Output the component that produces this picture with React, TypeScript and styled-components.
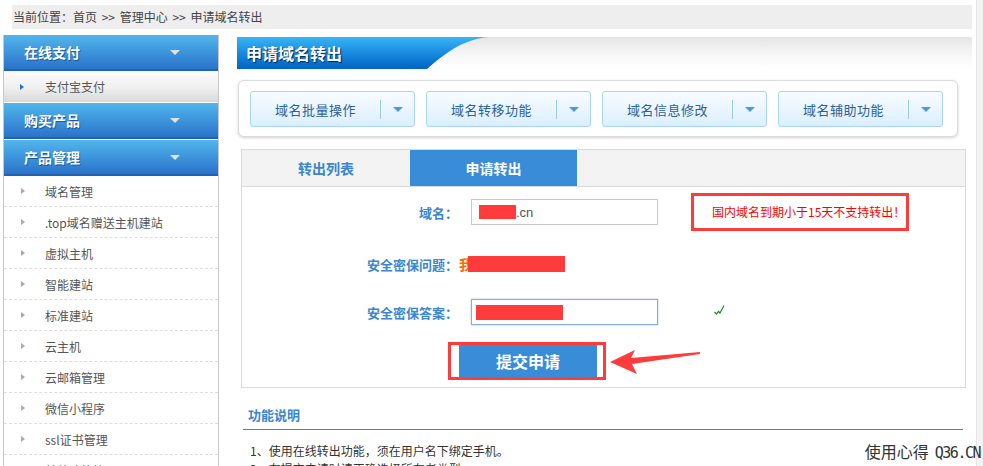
import styled, { createGlobalStyle } from 'styled-components';

const GlobalStyle = createGlobalStyle`
  html, body {
    margin: 0;
    padding: 0;
    background: #fff;
  }
  body {
    font-family: "Noto Sans CJK SC", "Noto Sans", sans-serif;
    font-size: 12px;
    color: #444;
  }
`;

const Page = styled.div`
  position: relative;
  width: 983px;
  height: 466px;
  overflow: hidden;
  background: #fff;
`;

const ScrollStrip = styled.div`
  position: absolute;
  top: 0;
  right: 0;
  width: 6px;
  height: 100%;
  background: #f3f3f3;
  border-left: 1px solid #e6e6e6;
`;

const Breadcrumb = styled.div`
  margin: 5px 11px 0 12px;
  height: 24px;
  line-height: 24px;
  padding-left: 1px;
  background: #eee;
  color: #444;
  font-size: 12px;
  white-space: nowrap;
  word-spacing: 2px;
`;

const Body = styled.div`
  display: flex;
  align-items: flex-start;
  margin-top: 6px;
  padding-left: 3px;
`;

/* ---------- sidebar ---------- */

const Sidebar = styled.aside`
  width: 214px;
  border-left: 1px solid #c8c8c8;
  border-right: 1px solid #c8c8c8;
  min-height: 440px;
`;

const SideHeader = styled.div<{ $first?: boolean }>`
  display: flex;
  align-items: center;
  justify-content: space-between;
  box-sizing: border-box;
  height: 36px;
  margin-top: ${({ $first }) => ($first ? '0' : '1px')};
  padding: 0 38px 0 20px;
  background: linear-gradient(#52b6ec 0%, #3f98dd 45%, #2a73c9 100%);
  border-bottom: 2px solid #2262b4;
  color: #fff;
  font-size: 14px;
  font-weight: bold;
  text-shadow: 1px 1px 0 rgba(0, 40, 110, 0.55);

  &::after {
    content: '';
    border-left: 5px solid transparent;
    border-right: 5px solid transparent;
    border-top: 5px solid #dde3ea;
  }
`;

const SubItem = styled.div`
  display: flex;
  align-items: center;
  height: 31px;
  padding-left: 16px;
  background: linear-gradient(#fdfdfd 0%, #efefef 55%, #d9d9d9 100%);
  color: #555;
  font-size: 12px;

  &::before {
    content: '';
    margin-right: 21px;
    border-top: 3px solid transparent;
    border-bottom: 3px solid transparent;
    border-left: 4px solid #2a6fc7;
  }
`;

const MenuItem = styled.div`
  display: flex;
  align-items: center;
  height: 30px;
  padding-left: 17px;
  border-bottom: 1px dashed #dedede;
  color: #555;
  font-size: 12px;
  white-space: nowrap;

  &::before {
    content: '';
    margin-right: 20px;
    border-top: 3px solid transparent;
    border-bottom: 3px solid transparent;
    border-left: 4px solid #aaa;
  }
`;

/* ---------- main ---------- */

const Main = styled.main`
  width: 735px;
  margin-left: 18px;
`;

const TitleBar = styled.div`
  display: flex;
  margin-top: 2px;
  height: 32px;
  background: linear-gradient(#e4e4e4 0%, #f3f3f3 40%, #fff 100%);
`;

const TitleTab = styled.div`
  width: 252px;
  height: 32px;
  box-sizing: border-box;
  padding-left: 9px;
  line-height: 32px;
  background: linear-gradient(#36b6f4 0%, #1a8ae0 50%, #0063c0 100%);
  clip-path: path('M0 0 H252 C224 2 204 20 190 32 H0 Z');
  color: #fff;
  font-size: 16px;
  font-weight: bold;
  text-shadow: 1px 1px 1px #03254f;
`;

const Toolbar = styled.div`
  display: flex;
  gap: 11px;
  box-sizing: border-box;
  width: 720px;
  height: 57px;
  margin: 11px 0 0 1px;
  padding: 10px 11px;
  border: 1px solid #dcdcdc;
  border-radius: 6px;
  box-shadow: 0 1px 3px rgba(0, 0, 0, 0.18);
  background: #fff;
`;

const DropButton = styled.div`
  display: flex;
  align-items: center;
  box-sizing: border-box;
  width: 165px;
  height: 36px;
  border: 1px solid #a9d6f6;
  border-radius: 3px;
  background: linear-gradient(#f8fcff 0%, #dbefff 100%);
`;

const DropLabel = styled.span`
  flex: 1;
  text-align: center;
  color: #2f6196;
  font-size: 13px;
  letter-spacing: 0.5px;
`;

const DropSplit = styled.span`
  width: 1px;
  height: 19px;
  background: #9fcbeb;
`;

const DropCaret = styled.span`
  display: flex;
  justify-content: center;
  width: 33px;

  &::after {
    content: '';
    border-left: 5px solid transparent;
    border-right: 5px solid transparent;
    border-top: 5px solid #4b9ad9;
  }
`;

const Panel = styled.section`
  box-sizing: border-box;
  width: 725px;
  height: 239px;
  margin: 12px 0 0 4px;
  border: 1px solid #dadada;
`;

const TabHeader = styled.div`
  display: flex;
  height: 36px;
  background: #f3f3f3;
  border-bottom: 1px solid #dadada;
`;

const Tab = styled.div<{ $active?: boolean }>`
  width: ${({ $active }) => ($active ? '167px' : '168px')};
  line-height: 36px;
  text-align: center;
  font-size: 14px;
  font-weight: bold;
  background: ${({ $active }) => ($active ? '#398cd8' : 'transparent')};
  color: ${({ $active }) => ($active ? '#fff' : '#3a86cf')};
`;

const Form = styled.div`
  padding-top: 12px;
`;

const FormRow = styled.div<{ $top: number }>`
  display: flex;
  align-items: center;
  height: 26px;
  margin-top: ${({ $top }) => $top}px;
`;

const Label = styled.span`
  width: 216px;
  text-align: right;
  color: #3a86cf;
  font-size: 13px;
  font-weight: bold;
`;

const Input = styled.div<{ $focus?: boolean }>`
  display: flex;
  align-items: center;
  box-sizing: border-box;
  width: 187px;
  height: 26px;
  margin-left: 13px;
  padding-left: ${({ $focus }) => ($focus ? '4px' : '7px')};
  border: 1px solid ${({ $focus }) => ($focus ? '#86acec' : '#c9c9c9')};
  box-shadow: ${({ $focus }) => ($focus ? '0 0 2px #aac4f2' : 'none')};
  color: #555;
  font-family: "Liberation Sans", Arial, sans-serif;
  font-size: 13px;
`;

const Redact = styled.span<{ $w: number; $h: number }>`
  display: inline-block;
  width: ${({ $w }) => $w}px;
  height: ${({ $h }) => $h}px;
  background: #ff3b3b;
`;

const Alert = styled.div`
  box-sizing: border-box;
  width: 218px;
  height: 38px;
  margin-left: 33px;
  padding-left: 18px;
  line-height: 32px;
  border: 3px solid #ff3b3b;
  color: #f00;
  font-size: 12px;
  white-space: nowrap;
`;

const Question = styled.span`
  display: flex;
  align-items: center;
  margin-left: 1px;
  color: #ff6a00;
  font-size: 14px;
  font-weight: bold;

  ${Redact} {
    margin-left: -5px;
  }
`;

const Check = styled.svg`
  margin: 0 0 6px 56px;
`;

const SubmitRow = styled.div`
  display: flex;
  align-items: center;
  margin: 17px 0 0 206px;
`;

const SubmitFrame = styled.div`
  display: flex;
  box-sizing: border-box;
  width: 158px;
  height: 38px;
  padding: 0 6px 0 8px;
  border: 3px solid #ff3b3b;
  background: #fff;
`;

const SubmitButton = styled.div`
  flex: 1;
  line-height: 32px;
  text-align: center;
  background: #398cd8;
  color: #fff;
  font-size: 16px;
  font-weight: bold;
`;

const Arrow = styled.svg`
  margin-left: 3px;
`;

const Notes = styled.section`
  width: 720px;
  margin-left: 6px;
`;

const NotesTitle = styled.div`
  padding: 18px 0 5px 5px;
  line-height: 18px;
  border-bottom: 1px solid #3a86cf;
  color: #3a86cf;
  font-size: 13px;
  font-weight: bold;
`;

const NoteLine = styled.div<{ $first?: boolean }>`
  margin-top: ${({ $first }) => ($first ? '12px' : '0')};
  padding-left: 7px;
  line-height: 18px;
  color: #333;
  font-size: 12px;
  white-space: nowrap;
`;

const Watermark = styled.div`
  position: absolute;
  right: 3px;
  bottom: 3px;
  display: flex;
  align-items: baseline;
  gap: 6px;
  color: #333;
  font-size: 16px;
  white-space: nowrap;
`;

const WatermarkSite = styled.span`
  font-family: "DejaVu Sans Mono", monospace;
  font-size: 15px;
  letter-spacing: -1.5px;
`;

const menuItems = [
  '域名管理',
  '.top域名赠送主机建站',
  '虚拟主机',
  '智能建站',
  '标准建站',
  '云主机',
  '云邮箱管理',
  '微信小程序',
  'ssl证书管理',
  '其他功能管理',
];

const tools = ['域名批量操作', '域名转移功能', '域名信息修改', '域名辅助功能'];

export default function App() {
  return (
    <Page>
      <GlobalStyle />
      <Breadcrumb>当前位置：首页 &gt;&gt; 管理中心 &gt;&gt; 申请域名转出</Breadcrumb>
      <Body>
        <Sidebar>
          <SideHeader $first>在线支付</SideHeader>
          <SubItem>支付宝支付</SubItem>
          <SideHeader>购买产品</SideHeader>
          <SideHeader>产品管理</SideHeader>
          {menuItems.map((m) => (
            <MenuItem key={m}>{m}</MenuItem>
          ))}
        </Sidebar>

        <Main>
          <TitleBar>
            <TitleTab>申请域名转出</TitleTab>
          </TitleBar>

          <Toolbar>
            {tools.map((t) => (
              <DropButton key={t}>
                <DropLabel>{t}</DropLabel>
                <DropSplit />
                <DropCaret />
              </DropButton>
            ))}
          </Toolbar>

          <Panel>
            <TabHeader>
              <Tab>转出列表</Tab>
              <Tab $active>申请转出</Tab>
            </TabHeader>
            <Form>
              <FormRow $top={0}>
                <Label>域名：</Label>
                <Input>
                  <Redact $w={37} $h={14} />
                  .cn
                </Input>
                <Alert>国内域名到期小于15天不支持转出！</Alert>
              </FormRow>
              <FormRow $top={26}>
                <Label>安全密保问题：</Label>
                <Question>
                  我<Redact $w={97} $h={16} />
                </Question>
              </FormRow>
              <FormRow $top={22}>
                <Label>安全密保答案：</Label>
                <Input $focus>
                  <Redact $w={87} $h={15} />
                </Input>
                <Check width="11" height="11" viewBox="0 0 11 11">
                  <path d="M0.5 8 L2.5 10 L4.5 7.5 L6 9 L10 1.5" fill="none" stroke="#1a8a1a" strokeWidth="1.2" />
                </Check>
              </FormRow>
              <SubmitRow>
                <SubmitFrame>
                  <SubmitButton>提交申请</SubmitButton>
                </SubmitFrame>
                <Arrow width="92" height="27" viewBox="0 0 92 27">
                  <polygon points="1,14 26,2 22,10 91,4 91,6 23,16 28,26" fill="#ff3b3b" />
                </Arrow>
              </SubmitRow>
            </Form>
          </Panel>

          <Notes>
            <NotesTitle>功能说明</NotesTitle>
            <NoteLine $first>1、使用在线转出功能，须在用户名下绑定手机。</NoteLine>
            <NoteLine>2、在提交申请时请正确选择所有者类型。</NoteLine>
          </Notes>
        </Main>
      </Body>
      <ScrollStrip />
      <Watermark>
        使用心得
        <WatermarkSite>Q36.CN</WatermarkSite>
      </Watermark>
    </Page>
  );
}
